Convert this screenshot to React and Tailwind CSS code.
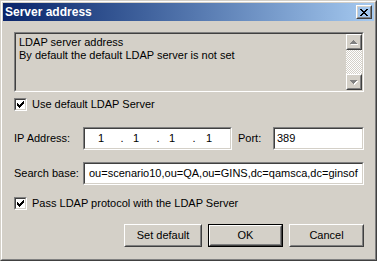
import React from 'react';

const face = 'bg-[#d4d0c8]';

function Sunken({ className = '', inner = 'bg-white', children }) {
  return (
    <div className={`border border-t-[#808080] border-l-[#808080] border-b-white border-r-white ${className}`}>
      <div className={`h-full w-full border border-t-[#404040] border-l-[#404040] border-b-[#d4d0c8] border-r-[#d4d0c8] ${inner}`}>
        {children}
      </div>
    </div>
  );
}

function Raised({ className = '', children }) {
  return (
    <div className={`border border-t-white border-l-white border-b-[#404040] border-r-[#404040] ${className}`}>
      <div className="flex h-full w-full items-center justify-center border border-t-[#d4d0c8] border-l-[#d4d0c8] border-b-[#808080] border-r-[#808080]">
        {children}
      </div>
    </div>
  );
}

function Check() {
  // classic 7x7 tick
  const cols = [2, 3, 4, 3, 2, 1, 0];
  return (
    <svg width="9" height="9" shapeRendering="crispEdges">
      {cols.map((y, i) => (
        <rect key={i} x={1 + i} y={1 + y} width="1" height="3" fill="#000" />
      ))}
    </svg>
  );
}

function Checkbox({ label }) {
  return (
    <div className="flex h-[13px] items-center">
      <Sunken className="h-[13px] w-[13px]">
        <Check />
      </Sunken>
      <span className="ml-[5px]">{label}</span>
    </div>
  );
}

function CloseGlyph() {
  const rows = [
    [0, 1, 6, 7],
    [1, 2, 5, 6],
    [2, 3, 4, 5],
    [3, 4],
    [2, 3, 4, 5],
    [1, 2, 5, 6],
    [0, 1, 6, 7],
  ];
  return (
    <svg width="8" height="7" shapeRendering="crispEdges">
      {rows.map((r, y) => r.map((x) => <rect key={`${x}-${y}`} x={x} y={y} width="1" height="1" fill="#000" />))}
    </svg>
  );
}

function Arrow({ down }) {
  const rows = [1, 3, 5, 7];
  const list = down ? [...rows].reverse() : rows;
  return (
    <svg width="8" height="5" shapeRendering="crispEdges">
      {list.map((w, i) => (
        <rect key={`s${i}`} x={(7 - w) / 2 + 1} y={i + 1} width={w} height="1" fill="#fff" />
      ))}
      {list.map((w, i) => (
        <rect key={i} x={(7 - w) / 2} y={i} width={w} height="1" fill="#808080" />
      ))}
    </svg>
  );
}

export default function App() {
  return (
    <div className={`h-[261px] w-[377px] overflow-hidden border border-t-[#d4d0c8] border-l-[#d4d0c8] border-b-[#404040] border-r-[#404040] ${face} font-['Liberation_Sans',Arial,sans-serif] text-[11px] leading-[13px] text-black`}>
      <div className="flex h-full w-full flex-col border border-t-white border-l-white border-b-[#808080] border-r-[#808080] p-px">
        {/* title bar */}
        <div className="flex h-[18px] items-center justify-between bg-linear-to-r from-[#0a246a] to-[#a6caf0] pl-[2px] pr-[2px]">
          <span className="text-[12px] font-bold text-white">Server address</span>
          <Raised className="h-[14px] w-[16px]">
            <CloseGlyph />
          </Raised>
        </div>

        {/* body */}
        <div className="flex flex-col pl-[11px] pr-[10px] pt-[11px]">
          <Sunken className="h-[60px]" inner="bg-[#d4d0c8] flex">
            <div className="flex-1 pl-[3px] pt-[2px]">
              <div>LDAP server address</div>
              <div>By default the default LDAP server is not set</div>
            </div>
            <div className="flex w-[16px] flex-col">
              <Raised className="h-[16px] w-[16px]">
                <Arrow />
              </Raised>
              <div className="flex-1 bg-[repeating-conic-gradient(#ffffff_0%_25%,#d4d0c8_0%_50%)] bg-[length:2px_2px]" />
              <Raised className="h-[16px] w-[16px]">
                <Arrow down />
              </Raised>
            </div>
          </Sunken>

          <div className="mt-[6px]">
            <Checkbox label="Use default LDAP Server" />
          </div>

          <div className="mt-[16px] flex h-[23px] items-center">
            <span className="w-[69px]">IP Address:</span>
            <Sunken className="h-[23px] w-[149px]" inner="bg-white flex items-center">
              <span className="ml-[13px] w-[6px] text-center">1</span>
              <span className="ml-[15px] w-[6px] text-center">.</span>
              <span className="ml-[8px] w-[6px] text-center">1</span>
              <span className="ml-[16px] w-[6px] text-center">.</span>
              <span className="ml-[8px] w-[6px] text-center">1</span>
              <span className="ml-[16px] w-[6px] text-center">.</span>
              <span className="ml-[9px] w-[6px] text-center">1</span>
            </Sunken>
            <span className="ml-[6px] w-[35px]">Port:</span>
            <Sunken className="h-[23px] flex-1" inner="bg-white flex items-center pl-[2px]">
              389
            </Sunken>
          </div>

          <div className="mt-[12px] flex h-[23px] items-center">
            <span className="w-[69px]">Search base:</span>
            <Sunken className="h-[23px] flex-1" inner="bg-white flex items-center overflow-hidden whitespace-nowrap pl-[4px]">
              ou=scenario10,ou=QA,ou=GINS,dc=qamsca,dc=ginsof
            </Sunken>
          </div>

          <div className="mt-[12px]">
            <Checkbox label="Pass LDAP protocol with the LDAP Server" />
          </div>

          <div className="mt-[14px] flex justify-end gap-[6px] pr-[-1px]">
            <Raised className="h-[23px] w-[78px]">Set default</Raised>
            <div className="h-[23px] w-[75px] border border-black">
              <Raised className="h-full w-full">OK</Raised>
            </div>
            <Raised className="h-[23px] w-[75px]">Cancel</Raised>
          </div>
        </div>
      </div>
    </div>
  );
}
